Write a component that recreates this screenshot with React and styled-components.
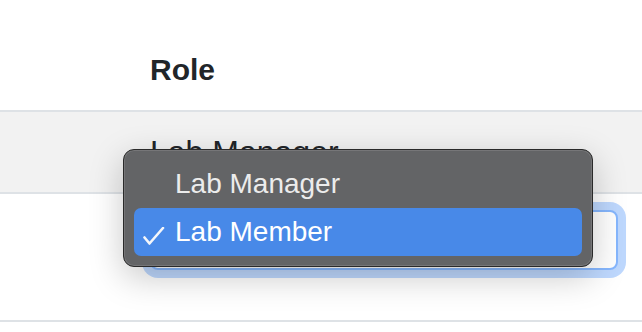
import styled, { createGlobalStyle } from "styled-components";

const GlobalStyle = createGlobalStyle`
  body {
    margin: 0;
    background: #fff;
    font-family: "Liberation Sans", Arial, Helvetica, sans-serif;
    color: #212529;
  }
`;

const Page = styled.div`
  position: relative;
  box-sizing: border-box;
  padding-top: 30px;
  width: 642px;
  height: 332px;
  overflow: hidden;
`;

const Table = styled.table`
  width: 100%;
  border-collapse: collapse;
`;

const Gutter = styled.td`
  width: 134px;
  padding: 0;
  background: ${(p) => (p.striped ? "#f2f2f2" : "transparent")};
  border-bottom: 2px solid #dee2e6;
`;

const HeadCell = styled.th`
  text-align: left;
  padding: 16px 24px 16px 16px;
  font-size: 30px;
  line-height: 48px;
  font-weight: 700;
  border-bottom: 2px solid #dee2e6;
`;

const Cell = styled.td`
  padding: ${(p) => (p.tall ? "16px 24px 50px 16px" : "16px 24px 16px 16px")};
  vertical-align: top;
  font-size: 32px;
  line-height: 48px;
  background: ${(p) => (p.striped ? "#f2f2f2" : "transparent")};
  border-bottom: 2px solid #dee2e6;
`;

const SelectBox = styled.div`
  box-sizing: border-box;
  width: 468px;
  height: 60px;
  border: 2px solid #86b7fe;
  border-radius: 8px;
  background: #fff;
  box-shadow: 0 0 0 8px rgba(13, 110, 253, 0.27);
`;

const Menu = styled.div`
  position: absolute;
  left: 123px;
  top: 149px;
  width: 470px;
  box-sizing: border-box;
  padding: 10px;
  background: #636466;
  border: 1px solid #2a2a2a;
  border-radius: 11px;
  box-shadow: inset 0 0 0 1px rgba(255, 255, 255, 0.12),
    0 10px 34px rgba(0, 0, 0, 0.22);
`;

const Item = styled.div`
  position: relative;
  height: 48px;
  padding-left: 41px;
  border-radius: 7px;
  font-size: 28px;
  line-height: 48px;
  color: ${(p) => (p.selected ? "#ffffff" : "#ececec")};
  background: ${(p) => (p.selected ? "#4889e8" : "transparent")};
`;

const Check = styled.svg`
  position: absolute;
  left: 9px;
  top: 19px;
`;

function CheckMark() {
  return (
    <Check width="22" height="18" viewBox="0 0 22 18">
      <path
        d="M1.5 10.5 L6.5 16.5 L20 1"
        fill="none"
        stroke="#f4f6fa"
        strokeWidth="2.6"
        strokeLinecap="round"
        strokeLinejoin="round"
      />
    </Check>
  );
}

const roles = ["Lab Manager", "Lab Member"];

function App() {
  const current = "Lab Member";
  return (
    <Page>
      <GlobalStyle />
      <Table>
        <thead>
          <tr>
            <Gutter as="th" />
            <HeadCell>Role</HeadCell>
          </tr>
        </thead>
        <tbody>
          <tr>
            <Gutter striped />
            <Cell striped>Lab Manager</Cell>
          </tr>
          <tr>
            <Gutter />
            <Cell tall>
              <SelectBox />
            </Cell>
          </tr>
        </tbody>
      </Table>
      <Menu>
        {roles.map((role) => (
          <Item key={role} selected={role === current}>
            {role === current && <CheckMark />}
            {role}
          </Item>
        ))}
      </Menu>
    </Page>
  );
}

export default App;
